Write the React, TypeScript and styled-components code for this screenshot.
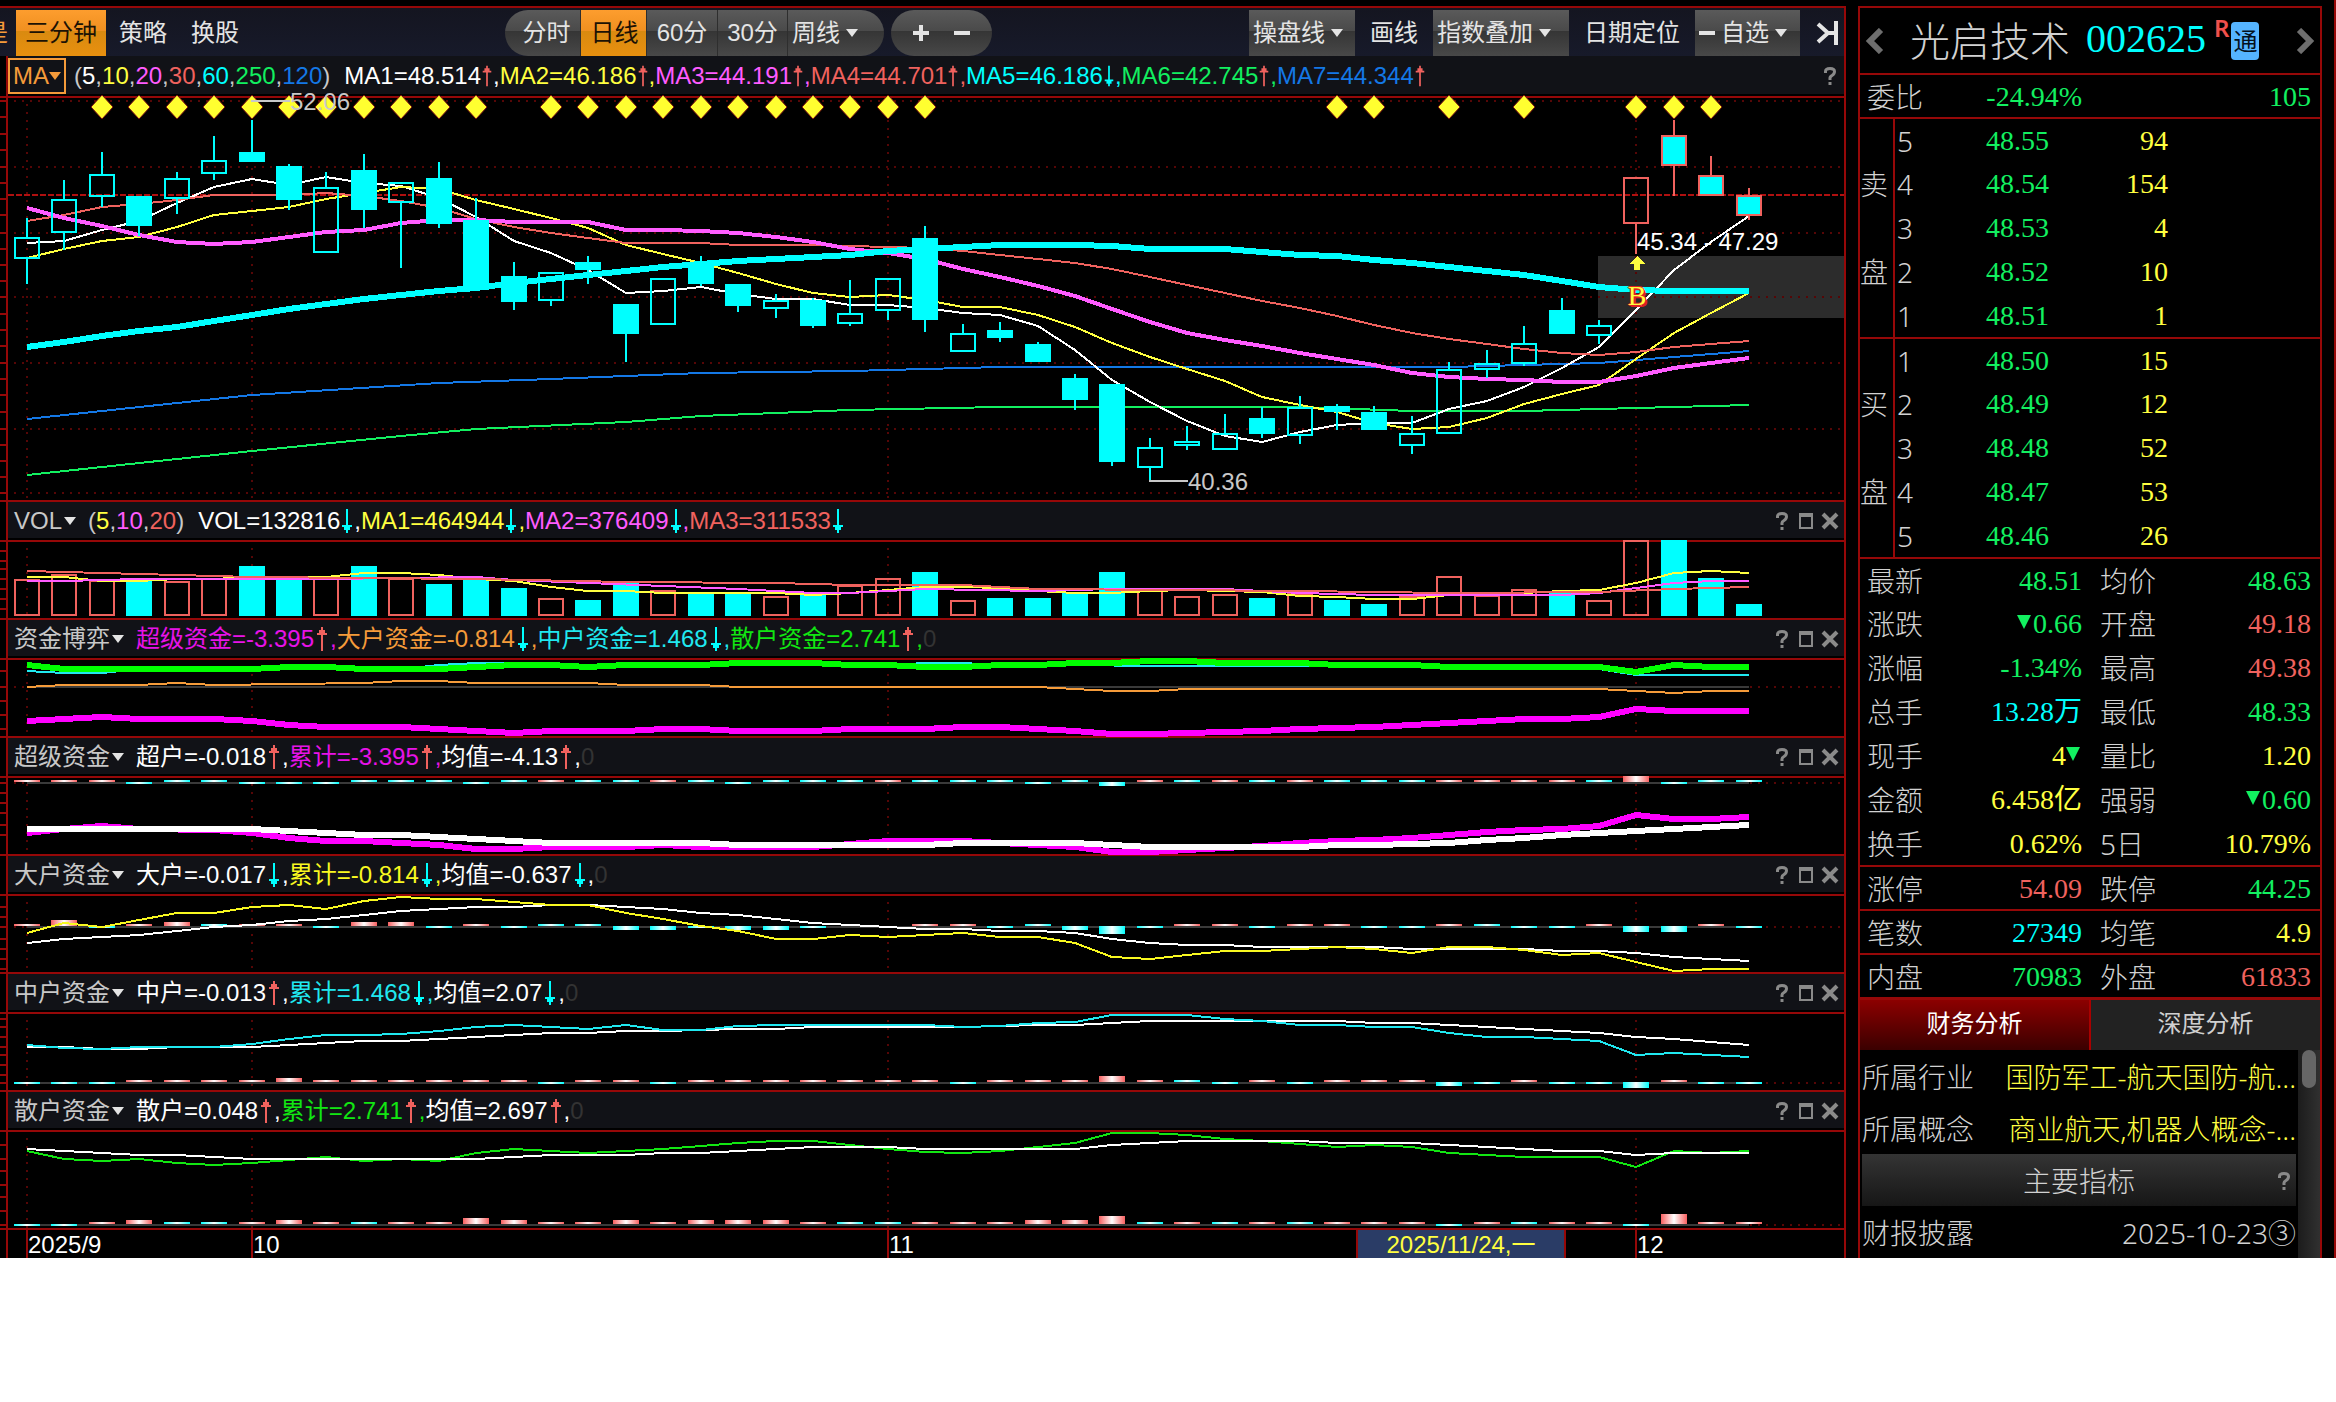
import React from "react";
import styled, { createGlobalStyle, css } from "styled-components";

const C = {
  rule: "#960808",
  grid: "#560606",
  up: "#f0625e",
  cyan: "#00ffff",
  green: "#12f060",
  lime: "#12e612",
  yellow: "#ffff40",
  magenta: "#ff5cff",
  fuchsia: "#ff00ff",
  orange: "#f59b3a",
  blue: "#1478e6",
  text: "#c8c8c8",
  white: "#ffffff",
  bar: "#111217",
};

const SANS = `"Liberation Sans", "Noto Sans CJK SC", sans-serif`;
const UI = `"Noto Sans", "Noto Sans CJK SC", sans-serif`;
const SERIF = `"Liberation Serif", "Noto Sans CJK SC", serif`;

const Global = createGlobalStyle`
  *, *::before, *::after { box-sizing: border-box; }
  body { margin: 0; background: #fff; font-family: ${SANS}; }
  button, select { font: inherit; color: inherit; background: none; border: 0; margin: 0; padding: 0; cursor: pointer; }
`;

/* ---------- shell ---------- */

const Shell = styled.div`
  display: flex;
  gap: 12px;
  padding: 6px 12px 0 0;
  background: #000;
  border-right: 2px solid ${C.rule};
  color: ${C.text};
  font-size: 24px;
  line-height: 28px;
`;

const Main = styled.main`
  flex: 1;
  min-width: 0;
  border-top: 2px solid ${C.rule};
  border-right: 2px solid ${C.rule};
`;

/* ---------- toolbar ---------- */

const Toolbar = styled.div`
  display: flex;
  align-items: stretch;
  height: 48px;
  padding: 2px 0 0 0;
  background: linear-gradient(#141520, #171a2a);
  color: #e4e4e4;
  overflow: hidden;
`;

const metal = css`
  background: linear-gradient(#5a5a5a 0%, #4a4a4a 45%, #353535 46%, #484848 100%);
`;
const amber = css`
  background: linear-gradient(#fd9d2e 0%, #f09020 45%, #d98a10 46%, #e8900f 100%);
  color: #1c1204;
`;

const ToolButton = styled.button<{ $active?: boolean; $w?: number; $pad?: number }>`
  display: flex;
  align-items: center;
  justify-content: center;
  width: ${(p) => (p.$w ? `${p.$w}px` : "auto")};
  padding-left: ${(p) => p.$pad ?? 0}px;
  white-space: nowrap;
  ${(p) => p.$active && amber}
`;

const Clipped = styled.button`
  width: 8px;
  margin-right: 8px;
  overflow: hidden;
  direction: rtl;
  white-space: nowrap;
  color: ${C.orange};
`;

const Group = styled.div<{ $round?: boolean; $gap?: number; $w?: number }>`
  display: flex;
  ${metal}
  width: ${(p) => (p.$w ? `${p.$w}px` : "auto")};
  border-radius: ${(p) => (p.$round ? "23px" : "0")};
  margin-left: ${(p) => p.$gap ?? 0}px;
  overflow: hidden;
`;

const Segments = styled(Group)`
  & > * + * {
    border-left: 1px solid #2e2e2e;
  }
`;

const Spacer = styled.div`
  flex: 1;
`;

const Picker = styled.label<{ $w: number }>`
  position: relative;
  display: flex;
  align-items: center;
  gap: 6px;
  width: ${(p) => p.$w}px;
  padding: 0 4px;
`;

const PickerSelect = styled.select`
  appearance: none;
  height: 100%;
  line-height: 28px;
  white-space: nowrap;
  & option {
    color: #000;
  }
`;

const Dash = styled.span`
  width: 16px;
  height: 4px;
  background: #e4e4e4;
`;

const Triangle = styled.span<{ $c?: string }>`
  width: 0;
  height: 0;
  flex: none;
  border: 6px solid transparent;
  border-top: 8px solid ${(p) => p.$c ?? "#e4e4e4"};
  border-bottom: 0;
`;

function Drop({ name, w, dash }: { name: string; w: number; dash?: boolean }) {
  return (
    <Picker $w={w}>
      {dash && <Dash />}
      <PickerSelect aria-label={name}>
        <option>{name}</option>
      </PickerSelect>
      <Triangle />
    </Picker>
  );
}

/* ---------- indicator panels ---------- */

const Panel = styled.section`
  display: flex;
  border-top: 2px solid ${C.rule};
`;

const FirstPanel = styled(Panel)`
  border-top: 0;
`;

const Gutter = styled.div`
  flex: 0 0 8px;
  border-right: 2px solid ${C.rule};
  & > svg {
    display: block;
  }
`;

const Body = styled.div`
  flex: 1;
  min-width: 0;
`;

const Legend = styled.header`
  display: flex;
  align-items: center;
  height: 40px;
  padding: 0 2px 0 6px;
  background: linear-gradient(${C.bar} 36px, #000 36px);
  border-bottom: 2px solid ${C.rule};
  white-space: nowrap;
`;

const MainLegend = styled(Legend)`
  height: 42px;
  padding-left: 0;
  background: linear-gradient(${C.bar} 38px, #000 38px);
`;

const LegendName = styled.button`
  display: flex;
  align-items: center;
  gap: 2px;
  margin-right: 12px;
`;

const BoxedName = styled(LegendName)`
  height: 36px;
  gap: 0;
  padding: 0 3px;
  margin-right: 8px;
  border: 2px solid ${C.orange};
  color: ${C.orange};
`;

const Params = styled.span`
  margin-right: 14px;
`;

const Tint = styled.span<{ $c: string }>`
  color: ${(p) => p.$c};
`;

const Reading = styled.span<{ $c: string }>`
  display: inline-flex;
  align-items: center;
  color: ${(p) => p.$c};
`;

const IconButton = styled.button`
  display: flex;
  align-items: center;
  justify-content: center;
  width: 24px;
  height: 28px;
  color: #8a8a8a;
`;

function Arrow({ up, w }: { up: boolean; w: number }) {
  const c = up ? C.up : C.cyan;
  return (
    <svg width={w} height="26" viewBox="0 0 14 26" aria-hidden="true">
      {up ? (
        <path d="M6 1h2v3h2v3h2v2H8v16H6V9H2V7h2V4h2z" fill={c} />
      ) : (
        <path d="M6 25h2v-3h2v-3h2v-2H8V1H6v16H2v2h2v3h2z" fill={c} />
      )}
    </svg>
  );
}

const Help = () => (
  <IconButton aria-label="?">
    <svg width="14" height="20" viewBox="0 0 14 20" aria-hidden="true" fill="none" stroke="currentColor" strokeWidth="3">
      <path d="M2.5 7V5.500Q2.500 2.500 7 2.500T11.500 5.500Q11.500 8 9 9.500T7 13v1" />
      <path d="M7 16v3" />
    </svg>
  </IconButton>
);
const Maximize = () => (
  <IconButton aria-label="□">
    <svg width="18" height="18" viewBox="0 0 18 18" aria-hidden="true">
      <path d="M2 1h14v16H2zM4 5v10h10V5z" fill="currentColor" fillRule="evenodd" />
    </svg>
  </IconButton>
);
const Close = () => (
  <IconButton aria-label="×">
    <svg width="18" height="18" viewBox="0 0 18 18" aria-hidden="true">
      <path d="M2 2L16 16M16 2L2 16" stroke="currentColor" strokeWidth="4" />
    </svg>
  </IconButton>
);

type Item = { t: string; c: string; up: boolean };

function Readings({ items, zero, arrow = 14 }: { items: Item[]; zero?: boolean; arrow?: number }) {
  return (
    <>
      {items.map((r, i) => (
        <Reading key={r.t} $c={r.c}>
          {r.t}
          <Arrow up={r.up} w={arrow} />
          {(zero || i < items.length - 1) && ","}
        </Reading>
      ))}
      {zero && <Tint $c="#333">0</Tint>}
    </>
  );
}

/* ---------- plots ---------- */

const W = 1836;
const cx = (i: number) => Math.round(19 + 37.43 * i);
const MONTHS = [0, 6, 23, 43];

const PlotBox = styled.div`
  position: relative;
`;

const Plot = styled.svg`
  display: block;
  width: 100%;
  overflow: visible;
  shape-rendering: crispEdges;
`;

const PlotLabel = styled.span<{ $c?: string; $mid?: boolean }>`
  position: absolute;
  color: ${(p) => p.$c ?? C.text};
  transform: translate(${(p) => (p.$mid ? "-50%" : "0")}, -50%);
  white-space: nowrap;
`;

const Signal = styled(PlotLabel)`
  font-family: ${SERIF};
  font-size: 28px;
  text-shadow: 1px 0 #e02020, -1px 0 #e02020, 0 1px #e02020, 0 -1px #e02020, 2px 2px #e02020;
`;

const at = (x: number, y: number) => ({ left: `${(x / W) * 100}%`, top: y });

type Pts = (number | [number, number])[];

function Line({ d, c, w = 2 }: { d: Pts; c: string; w?: number }) {
  const pts = d.map((p, i) => (typeof p === "number" ? `${cx(i)},${p}` : `${cx(p[0])},${p[1]}`));
  return <polyline points={pts.join(" ")} fill="none" stroke={c} strokeWidth={w} />;
}

function MonthLines({ h }: { h: number }) {
  return (
    <>
      {MONTHS.map((m) => (
        <line key={m} x1={cx(m)} x2={cx(m)} y1={6} y2={h} stroke={C.grid} strokeWidth="2" strokeDasharray="2 6" />
      ))}
    </>
  );
}

function Zero({ y }: { y: number }) {
  return (
    <>
      <line x1="6" x2={W} y1={y} y2={y} stroke={C.grid} strokeWidth="2" strokeDasharray="2 6" />
      <line x1={cx(0)} x2={cx(46)} y1={y} y2={y} stroke="#3a3a3a" strokeWidth="2" />
    </>
  );
}

/* Flow bars: r/c sit above the zero line, b is a cyan bar below it; a digit after the letter is the height. */
function Flow({ spec, y }: { spec: string; y: number }) {
  return (
    <>
      {spec.split(" ").map((s, i) => {
        if (s[0] === "-") return null;
        const h = Number(s.slice(1) || 2);
        const top = s[0] === "b" ? y - 1 : y - 1 - h;
        return (
          <rect key={i} x={cx(i) - 13} y={top} width="26" height={h} fill={s[0] === "r" ? "url(#flowIn)" : "url(#flowOut)"} />
        );
      })}
    </>
  );
}

const Gradients = () => (
  <defs>
    <linearGradient id="flowIn">
      <stop offset="0" stopColor="#f86060" />
      <stop offset="0.5" stopColor="#fff" />
      <stop offset="1" stopColor="#f86060" />
    </linearGradient>
    <linearGradient id="flowOut">
      <stop offset="0" stopColor="#00ffff" />
      <stop offset="0.5" stopColor="#fff" />
      <stop offset="1" stopColor="#00ffff" />
    </linearGradient>
  </defs>
);

/* high, body top, body bottom, low, kind (h hollow, s solid, r red hollow, m mixed) */
type Candle = [number, number, number, number, string];
const CANDLES: Candle[] = [
  [120, 139, 161, 186, "h"], [82, 101, 135, 152, "h"], [54, 76, 99, 109, "h"], [98, 98, 128, 138, "s"],
  [74, 80, 101, 116, "h"], [38, 62, 76, 82, "h"], [22, 54, 64, 64, "s"], [66, 68, 102, 112, "s"],
  [74, 89, 155, 155, "h"], [56, 72, 112, 130, "s"], [84, 84, 105, 170, "h"], [64, 80, 126, 130, "s"],
  [100, 122, 192, 192, "s"], [164, 178, 204, 212, "s"], [174, 174, 203, 208, "h"], [158, 164, 172, 186, "s"],
  [206, 206, 236, 264, "s"], [180, 180, 227, 227, "h"], [158, 164, 186, 188, "s"], [186, 186, 208, 214, "s"],
  [196, 202, 211, 220, "h"], [200, 202, 228, 230, "s"], [182, 215, 226, 228, "h"], [180, 180, 213, 222, "h"],
  [128, 140, 222, 234, "s"], [226, 235, 254, 254, "h"], [224, 232, 240, 244, "s"], [244, 246, 264, 264, "s"],
  [276, 280, 302, 312, "s"], [286, 286, 364, 368, "s"], [340, 349, 370, 383, "h"], [328, 343, 348, 352, "h"],
  [316, 335, 352, 352, "h"], [309, 320, 336, 340, "s"], [298, 309, 338, 346, "h"], [306, 308, 314, 332, "s"],
  [308, 314, 332, 332, "s"], [318, 335, 348, 356, "h"], [264, 271, 336, 336, "h"], [252, 265, 272, 280, "h"],
  [228, 245, 266, 268, "h"], [200, 212, 236, 236, "s"], [222, 227, 238, 246, "h"], [79, 79, 126, 156, "r"],
  [22, 37, 68, 98, "m"], [58, 77, 98, 98, "m"], [90, 97, 118, 122, "m"],
];

function CandleMark({ i, c }: { i: number; c: Candle }) {
  const [hi, top, bot, lo, k] = c;
  const stroke = k === "r" || k === "m" ? C.up : C.cyan;
  const fill = k === "h" || k === "r" ? "none" : C.cyan;
  const x = cx(i);
  return (
    <g stroke={stroke} strokeWidth="2">
      {hi < top && <line x1={x} x2={x} y1={hi} y2={top} />}
      {lo > bot && <line x1={x} x2={x} y1={bot} y2={lo} />}
      <rect x={x - 12} y={top + 1} width="24" height={bot - top - 2} fill={fill} />
    </g>
  );
}

const DIAMONDS = [2, 3, 4, 5, 6, 7, 8, 9, 10, 11, 12, 14, 15, 16, 17, 18, 19, 20, 21, 22, 23, 24, 35, 36, 38, 40, 43, 44, 45];
const GRID = [3, 69, 135, 199, 265, 331, 395];

const MA: { c: string; w?: number; d: Pts }[] = [
  { c: C.blue, d: [[0, 321], [6, 297], [11, 285], [14, 281], [18, 275], [22, 273], [26, 269], [38, 269], [40, 267], [42, 265], [44, 259], [46, 253]] },
  { c: C.green, d: [[0, 377], [6, 353], [10, 338], [12, 331], [16, 324], [18, 318], [22, 312], [26, 309], [34, 309], [37, 313], [40, 313], [42, 311], [44, 309], [46, 307]] },
  { c: C.white, d: [145, 143, 132, 123, 105, 89, 81, 87, 79, 85, 88, 100, 119, 143, 155, 172, 195, 193, 189, 196, 201, 201, 207, 207, 210, 215, 217, 228, 252, 282, 304, 323, 338, 344, 334, 327, 325, 325, 311, 303, 289, 270, 249, 212, 172, 144, 118] },
  { c: C.yellow, d: [160, 151, 143, 139, 129, 117, 113, 109, 101, 95, 89, 91, 102, 111, 120, 130, 147, 156, 165, 175, 186, 195, 199, 197, 202, 209, 209, 217, 229, 245, 259, 271, 283, 299, 307, 314, 325, 331, 329, 320, 306, 296, 287, 261, 235, 215, 195] },
  { c: C.up, d: [123, 117, 109, 106, 102, 97, 97, 97, 95, 98, 103, 110, 121, 129, 135, 140, 145, 145, 145, 147, 147, 147, 148, 149, 150, 153, 157, 161, 165, 171, 179, 187, 195, 203, 210, 218, 227, 235, 241, 246, 251, 255, 257, 254, 249, 246, 243] },
  { c: C.magenta, w: 4, d: [110, 120, 128, 137, 144, 146, 144, 139, 134, 132, 125, 122, 122, 124, 124, 124, 132, 132, 133, 135, 139, 144, 151, 155, 161, 171, 179, 188, 198, 211, 224, 235, 242, 248, 255, 261, 267, 275, 279, 281, 282, 284, 284, 278, 270, 265, 260] },
  { c: C.cyan, w: 6, d: [249, 244, 238, 233, 229, 223, 217, 211, 206, 201, 197, 193, 190, 185, 181, 177, 173, 169, 166, 163, 161, 159, 157, 153, 151, 149, 147, 147, 147, 148, 151, 151, 151, 154, 157, 158, 162, 165, 169, 173, 177, 183, 189, 192, 193, 193, 193] },
];

function PricePlot() {
  return (
    <PlotBox>
      <Plot height="402" viewBox={`0 0 ${W} 402`} preserveAspectRatio="none">
        <Gradients />
        <rect x="1590" y="158" width="246" height="62" fill="#2c2c2c" />
        {GRID.map((y) => (
          <line key={y} x1="6" x2={W} y1={y} y2={y} stroke={C.grid} strokeWidth="2" strokeDasharray="2 6" />
        ))}
        <MonthLines h={402} />
        <line x1="0" x2={W} y1="97" y2="97" stroke="#b01010" strokeWidth="2" strokeDasharray="6 2" />
        {MA.map((m, i) => (
          <Line key={i} {...m} />
        ))}
        {CANDLES.map((c, i) => (
          <CandleMark key={i} i={i} c={c} />
        ))}
        {DIAMONDS.map((i) => (
          <path
            key={i}
            d={`M${cx(i)} -3L${cx(i) + 11} 9L${cx(i)} 21L${cx(i) - 11} 9Z`}
            fill="#ffff30"
            stroke="#7a1010"
            strokeWidth="1"
            shapeRendering="auto"
          />
        ))}
        <path d="M243 3H282M1141 383H1180" stroke={C.text} strokeWidth="2" />
        <path d="M1629 158L1637 166H1632V172H1626V166H1621Z" fill={C.yellow} />
      </Plot>
      <PlotLabel style={at(282, 4)}>52.06</PlotLabel>
      <PlotLabel style={at(1180, 384)}>40.36</PlotLabel>
      <PlotLabel $c={C.white} style={at(1629, 144)}>45.34 - 47.29</PlotLabel>
      <Signal $c={C.yellow} $mid style={at(1629, 198)}>B</Signal>
    </PlotBox>
  );
}

const VOLUME = "r37 r32 r38 c38 r39 r36 c24 c37 r36 c24 r36 c42 c37 c46 r56 c58 c41 r48 c51 c51 r54 c52 r43 r36 c30 r58 c56 c56 c51 c30 r48 r54 r52 c56 r51 c58 c62 r54 r34 r53 r47 c50 r58 r-2 c-2 c36 c62".split(" ");

function VolumeBars() {
  return (
    <>
      {VOLUME.map((v, i) => {
        const y = Number(v.slice(1));
        const red = v[0] === "r";
        return (
          <rect key={i} x={cx(i) - 12} y={y + 1} width="24" height={72 - y} fill={red ? "none" : C.cyan} stroke={red ? C.up : C.cyan} strokeWidth="2" />
        );
      })}
    </>
  );
}

function Ticks({ head, h, ys }: { head: number; h: number; ys: number[] }) {
  return (
    <Gutter>
      <svg width="6" height={head + h} aria-hidden="true" shapeRendering="crispEdges">
        {[-1, ...ys].map((y) => (
          <path key={y} d={`M0 ${head + y}H6`} stroke={C.rule} strokeWidth="2" />
        ))}
      </svg>
    </Gutter>
  );
}

interface IndicatorProps {
  name: string;
  params?: React.ReactNode;
  items: Item[];
  zero?: boolean;
  h?: number;
  ticks: number[];
  children: React.ReactNode;
}

function Indicator({ name, params, items, zero, h = 76, ticks, children }: IndicatorProps) {
  return (
    <Panel>
      <Ticks head={40} h={h} ys={ticks} />
      <Body>
        <Legend>
          <LegendName aria-haspopup="menu">
            {name}
            <Triangle />
          </LegendName>
          {params}
          <Readings items={items} zero={zero} arrow={zero ? 16 : 14} />
          <Spacer />
          <Help />
          <Maximize />
          <Close />
        </Legend>
        <Plot height={h} viewBox={`0 0 ${W} ${h}`} preserveAspectRatio="none">
          <MonthLines h={h} />
          {children}
        </Plot>
      </Body>
    </Panel>
  );
}

function ParamList({ list }: { list: [string, string][] }) {
  return (
    <Params>
      (
      {list.map(([v, c], i) => (
        <React.Fragment key={v}>
          <Tint $c={c}>{v}</Tint>
          {i < list.length - 1 && ","}
        </React.Fragment>
      ))}
      )
    </Params>
  );
}

/* ---------- date axis ---------- */

const AxisRow = styled.div`
  display: flex;
  border-top: 2px solid ${C.rule};
`;

const Axis = styled.div`
  position: relative;
  flex: 1;
  height: 28px;
  overflow: hidden;
  line-height: 30px;
  color: ${C.white};
`;

const Mark = styled.span`
  position: absolute;
  top: 0;
  height: 28px;
  border-left: 2px solid ${C.rule};
`;

const Cursor = styled.span`
  position: absolute;
  top: 0;
  width: 210px;
  height: 28px;
  background: #2a3c66;
  border: solid ${C.rule};
  border-width: 0 2px;
  color: ${C.yellow};
  text-align: center;
`;

/* ---------- quote panel ---------- */

const Side = styled.aside`
  flex: 0 0 464px;
  border: 2px solid ${C.rule};
  border-bottom: 0;
  font-family: ${UI};
  font-size: 28px;
  color: #d2d2d2;
`;

const Title = styled.header`
  display: flex;
  align-items: center;
  height: 65px;
  padding: 0 4px;
`;

const StockName = styled.h1`
  margin: 0 16px 0 24px;
  font-size: 40px;
  line-height: 48px;
  font-weight: 300;
`;

const Code = styled.span`
  font-family: ${SERIF};
  font-size: 40px;
  line-height: 48px;
  color: ${C.cyan};
  padding-bottom: 4px;
`;

const Margin = styled.sup`
  align-self: flex-start;
  margin: 8px 2px 0 8px;
  font-size: 24px;
  line-height: 24px;
  font-weight: 600;
  color: #f0504c;
`;

const Connect = styled.span`
  display: flex;
  align-items: center;
  justify-content: center;
  width: 28px;
  height: 38px;
  border-radius: 4px;
  background: #55b4ff;
  color: #04101c;
  font-size: 24px;
`;

const Nav = styled.button`
  display: flex;
  color: #6e6e6e;
`;

const Table = styled.table`
  width: 100%;
  table-layout: fixed;
  border-collapse: separate;
  border-spacing: 0;
`;

const Row = styled.tr<{ $rule?: boolean }>`
  & > * {
    height: 44px;
    padding: 2px 0 0;
    font-weight: 300;
    white-space: nowrap;
    border-top: ${(p) => (p.$rule ? `2px solid ${C.rule}` : "0")};
  }
`;

const Label = styled.th<{ $pad?: number }>`
  text-align: left;
  && {
    padding-left: ${(p) => p.$pad ?? 7}px;
  }
`;

const SideCell = styled.th`
  text-align: left;
  border-right: 2px solid ${C.rule};
`;

const Value = styled.td<{ $c: string; $pad?: number }>`
  font-family: ${SERIF};
  text-align: right;
  color: ${(p) => p.$c};
  && {
    padding-right: ${(p) => p.$pad ?? 0}px;
    font-weight: 400;
  }
`;

const Down = styled.span`
  display: inline-block;
  margin: 0 2px 4px 0;
  border: 7px solid transparent;
  border-top: 14px solid ${C.green};
  border-bottom: 0;
`;

const Tabs = styled.div`
  display: flex;
  height: 53px;
  border-top: 3px solid ${C.rule};
`;

const Tab = styled.button<{ $on?: boolean }>`
  flex: 1;
  font-size: 24px;
  padding-bottom: 4px;
  color: ${(p) => (p.$on ? "#fff" : "#d0d0d0")};
  background: ${(p) => (p.$on ? "linear-gradient(#8c0000, #3a0000)" : "#222")};
  border-right: ${(p) => (p.$on ? `2px solid #a00` : "0")};
`;

const Info = styled.div`
  display: flex;
  height: 208px;
`;

const InfoList = styled.dl`
  flex: 1;
  min-width: 0;
  margin: 0;
  padding: 0 2px;
  font-weight: 300;
`;

const InfoRow = styled.div`
  display: flex;
  align-items: center;
  justify-content: space-between;
  height: 52px;
  padding-top: 2px;
  & > dt,
  & > dd {
    margin: 0;
    white-space: nowrap;
  }
`;

const Section = styled.div`
  display: grid;
  grid-template-columns: 24px 1fr 24px;
  align-items: center;
  height: 52px;
  padding-top: 2px;
  background: linear-gradient(#343434, #161616);
  text-align: center;
`;

const Track = styled.div`
  width: 22px;
  padding: 0 4px;
  background: linear-gradient(90deg, #1c1c1c, #303030);
`;

const Thumb = styled.div`
  height: 38px;
  border-radius: 7px;
  background: #666;
`;

const SELL = [["5", "48.55", "94"], ["4", "48.54", "154"], ["3", "48.53", "4"], ["2", "48.52", "10"], ["1", "48.51", "1"]];
const BUY = [["1", "48.50", "15"], ["2", "48.49", "12"], ["3", "48.48", "52"], ["4", "48.47", "53"], ["5", "48.46", "26"]];

function Book({ rows, tag }: { rows: string[][]; tag: string }) {
  return (
    <>
      {rows.map(([lv, price, qty], i) => (
        <Row key={lv} $rule={i === 0}>
          <SideCell>{i === 1 ? tag : i === 3 ? "盘" : ""}</SideCell>
          <Label $pad={2}>{lv}</Label>
          <Value $c={C.green}>{price}</Value>
          <Value $c={C.yellow} $pad={152}>{qty}</Value>
        </Row>
      ))}
    </>
  );
}

type V = [React.ReactNode, string];
const STATS: [string, V, string, V, boolean?][] = [
  ["最新", ["48.51", C.green], "均价", ["48.63", C.green], true],
  ["涨跌", [<><Down />0.66</>, C.green], "开盘", ["49.18", C.up]],
  ["涨幅", ["-1.34%", C.green], "最高", ["49.38", C.up]],
  ["总手", ["13.28万", C.cyan], "最低", ["48.33", C.green]],
  ["现手", [<>4<Down /></>, C.yellow], "量比", ["1.20", C.yellow]],
  ["金额", ["6.458亿", C.yellow], "强弱", [<><Down />0.60</>, C.green]],
  ["换手", ["0.62%", C.yellow], "5日", ["10.79%", C.yellow]],
  ["涨停", ["54.09", C.up], "跌停", ["44.25", C.green], true],
  ["笔数", ["27349", C.cyan], "均笔", ["4.9", C.yellow], true],
  ["内盘", ["70983", C.green], "外盘", ["61833", C.up], true],
];

function Quote() {
  return (
    <Side>
      <Title>
        <Nav aria-label="‹">
          <svg width="22" height="26" viewBox="0 0 22 26" aria-hidden="true">
            <path d="M17 2L6 13L17 24" fill="none" stroke="currentColor" strokeWidth="6" />
          </svg>
        </Nav>
        <StockName>光启技术</StockName>
        <Code>002625</Code>
        <Margin>R</Margin>
        <Connect>通</Connect>
        <Spacer />
        <Nav aria-label="›">
          <svg width="22" height="26" viewBox="0 0 22 26" aria-hidden="true">
            <path d="M5 2L16 13L5 24" fill="none" stroke="currentColor" strokeWidth="6" />
          </svg>
        </Nav>
      </Title>
      <Table>
        <colgroup>
          <col width="121" />
          <col width="101" />
          <col />
        </colgroup>
        <tbody>
          <Row $rule>
            <Label>委比</Label>
            <Value $c={C.green}>-24.94%</Value>
            <Value $c={C.green} $pad={9}>105</Value>
          </Row>
        </tbody>
      </Table>
      <Table>
        <colgroup>
          <col width="35" />
          <col width="55" />
          <col width="99" />
          <col />
        </colgroup>
        <tbody>
          <Book rows={SELL} tag="卖" />
          <Book rows={BUY} tag="买" />
        </tbody>
      </Table>
      <Table>
        <colgroup>
          <col width="88" />
          <col width="134" />
          <col width="98" />
          <col />
        </colgroup>
        <tbody>
          {STATS.map(([a, va, b, vb, rule]) => (
            <Row key={a} $rule={rule}>
              <Label>{a}</Label>
              <Value $c={va[1]}>{va[0]}</Value>
              <Label $pad={18}>{b}</Label>
              <Value $c={vb[1]} $pad={9}>{vb[0]}</Value>
            </Row>
          ))}
        </tbody>
      </Table>
      <Tabs role="tablist">
        <Tab role="tab" aria-selected="true" $on>财务分析</Tab>
        <Tab role="tab" aria-selected="false">深度分析</Tab>
      </Tabs>
      <Info>
        <InfoList>
          <InfoRow>
            <dt>所属行业</dt>
            <Tint as="dd" $c={C.yellow}>国防军工-航天国防-航...</Tint>
          </InfoRow>
          <InfoRow>
            <dt>所属概念</dt>
            <Tint as="dd" $c={C.yellow}>商业航天,机器人概念-...</Tint>
          </InfoRow>
          <Section>
            <span />
            <span>主要指标</span>
            <Help />
          </Section>
          <InfoRow>
            <dt>财报披露</dt>
            <dd>2025-10-23③</dd>
          </InfoRow>
        </InfoList>
        <Track>
          <Thumb />
        </Track>
      </Info>
    </Side>
  );
}

/* ---------- page ---------- */

export default function App() {
  return (
    <>
      <Global />
      <Shell>
        <Main>
          <Toolbar>
            <Clipped>是</Clipped>
            <ToolButton $active $w={90}>三分钟</ToolButton>
            <ToolButton $w={74}>策略</ToolButton>
            <ToolButton $w={70}>换股</ToolButton>
            <Segments $round $gap={255}>
              <ToolButton $w={75} $pad={8}>分时</ToolButton>
              <ToolButton $active $w={66} $pad={2}>日线</ToolButton>
              <ToolButton $w={71}>60分</ToolButton>
              <ToolButton $w={70}>30分</ToolButton>
              <Drop name="周线" w={97} />
            </Segments>
            <Group $round $gap={7} $w={101}>
              <ToolButton $w={56} $pad={4} aria-label="+">
                <svg width="18" height="18" viewBox="0 0 18 18" aria-hidden="true">
                  <path d="M9 1V17M1 9H17" stroke="#e4e4e4" strokeWidth="4" />
                </svg>
              </ToolButton>
              <ToolButton $w={30} aria-label="−">
                <Dash />
              </ToolButton>
            </Group>
            <Spacer />
            <Group>
              <Drop name="操盘线" w={106} />
            </Group>
            <ToolButton $w={78}>画线</ToolButton>
            <Group>
              <Drop name="指数叠加" w={136} />
            </Group>
            <ToolButton $w={126}>日期定位</ToolButton>
            <Group>
              <Drop name="自选" w={105} dash />
            </Group>
            <ToolButton $w={44} $pad={12} aria-label="›|">
              <svg width="24" height="26" viewBox="0 0 24 26" aria-hidden="true" fill="none" stroke="#e4e4e4" strokeWidth="4">
                <path d="M2 4L12 13L2 22M20 1V25M20 13H12" />
              </svg>
            </ToolButton>
          </Toolbar>

          <FirstPanel>
            <Ticks head={42} h={402} ys={[3, 19, 36, 52, 69, 85, 101, 117, 135, 151, 167, 183, 199, 216, 232, 248, 265, 281, 297, 314, 331, 347, 363, 379, 395]} />
            <Body>
              <MainLegend>
                <BoxedName aria-haspopup="menu">
                  MA
                  <Triangle $c={C.orange} />
                </BoxedName>
                <ParamList list={[["5", C.white], ["10", C.yellow], ["20", C.magenta], ["30", C.up], ["60", C.cyan], ["250", C.green], ["120", C.blue]]} />
                <Readings
                  arrow={12}
                  items={[
                    { t: "MA1=48.514", c: C.white, up: true },
                    { t: "MA2=46.186", c: C.yellow, up: true },
                    { t: "MA3=44.191", c: C.magenta, up: true },
                    { t: "MA4=44.701", c: C.up, up: true },
                    { t: "MA5=46.186", c: C.cyan, up: false },
                    { t: "MA6=42.745", c: C.green, up: true },
                    { t: "MA7=44.344", c: C.blue, up: true },
                  ]}
                />
                <Spacer />
                <Help />
              </MainLegend>
              <PricePlot />
            </Body>
          </FirstPanel>

          <Indicator
            name="VOL"
            params={<ParamList list={[["5", C.yellow], ["10", C.magenta], ["20", C.up]]} />}
            items={[
              { t: "VOL=132816", c: C.white, up: false },
              { t: "MA1=464944", c: C.yellow, up: false },
              { t: "MA2=376409", c: C.magenta, up: false },
              { t: "MA3=311533", c: C.up, up: false },
            ]}
            ticks={[9, 19, 27, 37, 47, 57, 67]}
          >
            <VolumeBars />
            <Line c={C.yellow} d={[35, 35, 39, 39, 37, 37, 35, 35, 35, 31, 31, 33, 37, 39, 45, 49, 49, 51, 51, 51, 51, 53, 51, 48, 45, 45, 46, 49, 51, 51, 49, 48, 49, 50, 54, 55, 57, 57, 53, 53, 51, 49, 48, 41, 31, 29, 31]} />
            <Line c={C.magenta} d={[[0, 39], [1, 39], [3, 37], [8, 37], [12, 35], [13, 38], [15, 41], [17, 44], [19, 47], [21, 51], [22, 51], [24, 47], [27, 49], [29, 47], [32, 47], [34, 51], [36, 53], [41, 53], [42, 51], [43, 46], [44, 41], [45, 39], [46, 39]]} />
            <Line c={C.up} d={[[0, 29], [2, 31], [4, 33], [6, 35], [12, 37], [16, 40], [20, 41], [22, 43], [25, 43], [27, 47], [34, 49], [38, 51], [42, 50], [44, 47], [46, 45]]} />
          </Indicator>

          <Indicator
            name="资金博弈"
            zero
            items={[
              { t: "超级资金=-3.395", c: "#e812e8", up: true },
              { t: "大户资金=-0.814", c: C.orange, up: false },
              { t: "中户资金=1.468", c: "#20e8f0", up: false },
              { t: "散户资金=2.741", c: C.lime, up: true },
            ]}
            ticks={[11, 27, 41, 55, 69]}
          >
            <Zero y={27} />
            <Line c={C.orange} d={[[0, 27], [1, 25], [3, 25], [4, 23], [5, 25], [9, 23], [10, 21], [11, 21], [12, 23], [15, 23], [16, 25], [18, 25], [19, 27], [27, 27], [28, 29], [29, 31], [30, 31], [31, 29], [42, 29], [43, 31], [44, 33], [45, 31], [46, 31]]} />
            <Line c="#20e8f0" d={[[0, 11], [1, 13], [2, 13], [3, 9], [10, 9], [11, 5], [12, 3], [13, 3], [14, 5], [23, 5], [24, 3], [25, 3], [26, 5], [38, 7], [42, 9], [43, 15], [46, 15]]} />
            <Line c="#00ff00" w={6} d={[[0, 5], [1, 9], [6, 9], [7, 7], [8, 7], [9, 9], [11, 9], [13, 5], [14, 5], [15, 7], [16, 5], [18, 5], [19, 3], [21, 3], [22, 5], [23, 5], [24, 7], [25, 7], [26, 5], [27, 5], [28, 3], [29, 3], [30, 1], [31, 1], [32, 3], [34, 3], [35, 5], [37, 5], [38, 7], [42, 7], [43, 12], [44, 5], [45, 7], [46, 7]]} />
            <Line c={C.fuchsia} w={6} d={[[0, 61], [1, 59], [2, 57], [3, 59], [5, 59], [6, 61], [7, 65], [8, 67], [10, 67], [11, 69], [12, 71], [13, 73], [14, 71], [16, 71], [17, 69], [18, 69], [19, 71], [21, 71], [22, 69], [24, 69], [25, 67], [26, 67], [27, 69], [28, 71], [29, 74], [30, 74], [31, 73], [33, 71], [34, 69], [36, 67], [37, 65], [38, 63], [39, 61], [40, 59], [41, 59], [42, 57], [43, 49], [44, 51], [46, 51]]} />
          </Indicator>

          <Indicator
            name="超级资金"
            zero
            items={[
              { t: "超户=-0.018", c: C.white, up: true },
              { t: "累计=-3.395", c: "#e812e8", up: true },
              { t: "均值=-4.13", c: C.white, up: true },
            ]}
            ticks={[5, 15, 25, 35, 47, 57]}
          >
            <Zero y={5} />
            <Flow y={5} spec="r r r b c c b b b c c c b c r c c r c b c c c r c c c b c b4 r c r c r c c c r r r r c r6 b c c" />
            <Line c={C.fuchsia} w={6} d={[[0, 55], [1, 51], [2, 48], [3, 51], [5, 52], [6, 55], [7, 60], [8, 63], [9, 63], [10, 65], [11, 67], [12, 71], [13, 71], [14, 69], [16, 69], [17, 67], [18, 69], [20, 69], [21, 69], [22, 66], [23, 63], [25, 63], [26, 65], [28, 69], [29, 74], [30, 74], [31, 72], [33, 68], [34, 65], [35, 63], [36, 62], [37, 60], [38, 57], [39, 54], [40, 52], [41, 51], [42, 48], [43, 37], [44, 41], [45, 41], [46, 39]]} />
            <Line c={C.white} w={6} d={[[0, 51], [6, 51], [7, 53], [8, 55], [9, 57], [10, 57], [11, 59], [12, 61], [13, 63], [14, 65], [18, 65], [19, 67], [24, 67], [25, 65], [28, 65], [29, 67], [30, 69], [34, 69], [35, 67], [36, 67], [38, 65], [39, 62], [40, 60], [41, 57], [42, 55], [43, 53], [44, 51], [45, 49], [46, 47]]} />
          </Indicator>

          <Indicator
            name="大户资金"
            zero
            items={[
              { t: "大户=-0.017", c: C.white, up: false },
              { t: "累计=-0.814", c: "#f8f820", up: false },
              { t: "均值=-0.637", c: C.white, up: false },
            ]}
            ticks={[11, 21, 31, 43, 53, 63, 73]}
          >
            <Zero y={31} />
            <Flow y={31} spec="r r6 b r r4 c r r b r4 r4 b r b c c b4 b4 b b4 b4 b - - r r b c b4 b8 b r r b r r b b r c b b r b6 b6 r b" />
            <Line c={C.white} d={[47, 43, 41, 39, 35, 31, 29, 25, 23, 19, 15, 13, 11, 11, 9, 9, 11, 13, 17, 19, 23, 27, 29, 31, 33, 33, 35, 35, 37, 43, 47, 49, 49, 51, 51, 51, 51, 53, 53, 53, 53, 55, 55, 57, 61, 63, 65]} />
            <Line c="#f8f820" d={[37, 27, 31, 24, 17, 17, 11, 9, 13, 5, 1, 3, 3, 6, 9, 9, 17, 23, 30, 35, 43, 43, 39, 41, 39, 37, 41, 41, 47, 61, 63, 59, 55, 55, 53, 51, 53, 57, 51, 51, 54, 59, 57, 66, 75, 73, 73]} />
          </Indicator>

          <Indicator
            name="中户资金"
            zero
            items={[
              { t: "中户=-0.013", c: C.white, up: true },
              { t: "累计=1.468", c: "#20e8f0", up: false },
              { t: "均值=2.07", c: C.white, up: false },
            ]}
            ticks={[5, 13, 23, 33, 41, 51, 61, 69]}
          >
            <Zero y={69} />
            <Flow y={69} spec="b b b r r r r r4 r r r r r r b r r b r r r r r r r b r r r r6 r c b r b r r r b4 b r b b b6 r b b" />
            <Line c={C.white} d={[33, 33, 35, 35, 33, 33, 33, 31, 29, 27, 27, 25, 23, 21, 19, 19, 17, 17, 16, 15, 15, 13, 13, 13, 13, 13, 12, 11, 11, 9, 7, 7, 7, 7, 7, 7, 9, 9, 11, 13, 15, 17, 19, 23, 25, 28, 31]} />
            <Line c="#20e8f0" d={[31, 34, 35, 33, 33, 33, 30, 25, 21, 21, 20, 17, 13, 11, 13, 15, 11, 16, 16, 12, 11, 11, 11, 11, 11, 13, 12, 9, 8, 1, 1, 1, 5, 7, 11, 11, 13, 13, 19, 23, 23, 25, 27, 41, 39, 41, 43]} />
          </Indicator>

          <Indicator
            name="散户资金"
            zero
            h={96}
            items={[
              { t: "散户=0.048", c: C.white, up: true },
              { t: "累计=2.741", c: C.lime, up: true },
              { t: "均值=2.697", c: C.white, up: true },
            ]}
            ticks={[13, 27, 39, 53, 65, 79, 93]}
          >
            <Zero y={93} />
            <Flow y={93} spec="b b r r4 c c r r4 r c r r r6 r4 r r r4 r r4 r4 r4 r c c r r r r4 r4 r8 c r c r c r r r b r c r r b r10 r r" />
            <Line c={C.lime} d={[19, 27, 29, 27, 31, 33, 31, 28, 25, 29, 27, 29, 21, 17, 19, 21, 19, 17, 14, 11, 9, 9, 13, 17, 20, 21, 19, 15, 11, 1, 1, 3, 7, 9, 12, 15, 13, 15, 21, 23, 25, 25, 25, 35, 19, 21, 19]} />
            <Line c={C.white} d={[17, 19, 21, 23, 23, 25, 27, 27, 27, 27, 27, 27, 27, 25, 23, 23, 23, 21, 21, 19, 17, 15, 15, 15, 17, 17, 17, 17, 17, 13, 11, 9, 9, 9, 9, 11, 11, 11, 13, 15, 17, 19, 19, 23, 21, 21, 21]} />
          </Indicator>

          <AxisRow>
            <Gutter />
            <Axis>
              {["2025/9", "10", "11", "12"].map((m, i) => (
                <Mark key={m} style={{ left: `${((cx(MONTHS[i]) - 1) / W) * 100}%` }}>
                  {m}
                </Mark>
              ))}
              <Cursor style={{ left: `${(1348 / W) * 100}%` }}>2025/11/24,一</Cursor>
            </Axis>
          </AxisRow>
        </Main>
        <Quote />
      </Shell>
    </>
  );
}
